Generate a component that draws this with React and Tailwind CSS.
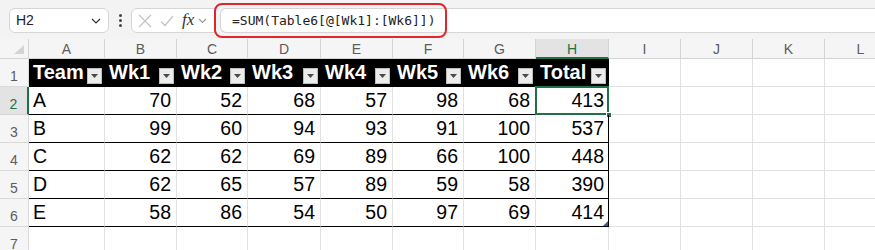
import React from "react";

const GRID =
  "grid grid-cols-[29px_76px_72px_71px_73px_72px_71px_72px_73px_72px_72px_72px_72px]";

const letters = ["A", "B", "C", "D", "E", "F", "G", "H", "I", "J", "K", "L"];
const headers = ["Team", "Wk1", "Wk2", "Wk3", "Wk4", "Wk5", "Wk6", "Total"];
const rows = [
  ["A", 70, 52, 68, 57, 98, 68, 413],
  ["B", 99, 60, 94, 93, 91, 100, 537],
  ["C", 62, 62, 69, 89, 66, 100, 448],
  ["D", 62, 65, 57, 89, 59, 58, 390],
  ["E", 58, 86, 54, 50, 97, 69, 414],
];

const FilterBtn = () => (
  <span className="self-end mb-[2px] w-[15px] h-[16px] shrink-0 bg-[#ececec] border border-[#bdbdbd] flex items-center justify-center">
    <svg width="7" height="4" viewBox="0 0 7 4">
      <path d="M0 0H7L3.5 4Z" fill="#4a4a4a" />
    </svg>
  </span>
);

const RowNum = ({ n, active }) => (
  <div
    className={
      active
        ? "h-[28px] flex items-end justify-center pb-[2px] border-b border-[#d4d4d4] border-r-2 border-r-[#1e7145] bg-[#e3e3e3] text-[#1e7145] text-[14px] leading-[16px]"
        : "h-[28px] flex items-end justify-center pb-[2px] border-b border-r border-[#d9d9d9] bg-[#f5f5f5] text-[#5c5c5c] text-[14px] leading-[16px]"
    }
  >
    {n}
  </div>
);

const Empty = () => <div className="h-[28px] border-r border-b border-[#e1e1e1] bg-white" />;

export default function App() {
  return (
    <div className="w-[875px] h-[250px] overflow-hidden bg-white font-['Liberation_Sans',Arial,sans-serif] relative">
      {/* formula bar */}
      <div className="h-[39px] bg-[#f3f3f3] flex items-start pt-[8px] pl-[9px]">
        <div className="w-[100px] h-[25px] bg-white border border-[#d6d6d6] rounded-[6px] flex items-center justify-between pl-[6px] pr-[7px]">
          <span className="text-[14px] text-[#222]">H2</span>
          <svg width="10" height="6" viewBox="0 0 10 6">
            <path d="M1 1l4 4 4-4" stroke="#333" strokeWidth="1.2" fill="none" />
          </svg>
        </div>
        <div className="w-[22px] h-[25px] flex flex-col items-center justify-center gap-[2px]">
          <span className="w-[3px] h-[3px] rounded-full bg-[#444]" />
          <span className="w-[3px] h-[3px] rounded-full bg-[#444]" />
          <span className="w-[3px] h-[3px] rounded-full bg-[#444]" />
        </div>
        <div className="w-[84px] h-[25px] bg-white border border-[#d6d6d6] rounded-l-[6px] flex items-center pl-[6px] gap-[8px]">
          <svg width="14" height="14" viewBox="0 0 14 14">
            <path d="M1 1L13 13M13 1L1 13" stroke="#c4c4c4" strokeWidth="1.2" />
          </svg>
          <svg width="14" height="12" viewBox="0 0 14 12">
            <path d="M1 6.5L5 10.5L13 1" stroke="#c4c4c4" strokeWidth="1.2" fill="none" />
          </svg>
          <span className="font-['Liberation_Serif',serif] italic text-[17px] text-[#333] leading-none -mt-[2px]">
            fx
          </span>
          <svg width="9" height="6" viewBox="0 0 9 6" className="-ml-[4px]">
            <path d="M1 1l3.5 3.5L8 1" stroke="#9a9a9a" strokeWidth="1.1" fill="none" />
          </svg>
        </div>
        <div className="ml-[5px] flex-1 h-[25px] bg-white border border-r-0 border-[#d6d6d6] rounded-l-[6px] flex items-center pl-[11px]">
          <span className="font-['DejaVu_Sans_Mono',monospace] text-[13px] text-[#222] pt-[1px]">
            =SUM(Table6[@[Wk1]:[Wk6]])
          </span>
        </div>
      </div>
      {/* annotation */}
      <div className="absolute left-[214px] top-[3px] w-[233px] h-[35px] border-2 border-[#e0262b] rounded-[8px]" />

      {/* column headers */}
      <div className={GRID + " h-[20px] bg-[#f5f5f5]"}>
        <div className="h-[20px] border-r border-b border-[#d4d4d4] relative">
          <svg width="10" height="9" viewBox="0 0 10 9" className="absolute right-[4px] bottom-[4px]">
            <path d="M10 0V9H0Z" fill="#d4d4d4" />
          </svg>
        </div>
        {letters.map((l) =>
          l === "H" ? (
            <div
              key={l}
              className="h-[20px] border-r border-[#d4d4d4] border-b-2 border-b-[#1e7145] bg-[#e3e3e3] text-center text-[14px] leading-[17px] pt-[2px] text-[#1e7145]"
            >
              {l}
            </div>
          ) : (
            <div
              key={l}
              className="h-[20px] border-r border-b border-[#d4d4d4] text-center text-[14px] leading-[17px] pt-[2px] text-[#5c5c5c]"
            >
              {l}
            </div>
          )
        )}
      </div>

      {/* row 1: table header */}
      <div className={GRID}>
        <RowNum n={1} />
        {headers.map((h) => (
          <div
            key={h}
            className="h-[28px] bg-black border-b border-black flex justify-between pl-[4px] pr-[3px] text-white font-bold text-[20px] leading-[27px]"
          >
            <span>{h}</span>
            <FilterBtn />
          </div>
        ))}
        <Empty />
        <Empty />
        <Empty />
        <Empty />
      </div>

      {/* data rows */}
      {rows.map((r, i) => (
        <div key={i} className={GRID}>
          <RowNum n={i + 2} active={i === 0} />
          {r.map((v, j) =>
            j === 0 ? (
              <div
                key={j}
                className="h-[28px] border-b border-b-black border-r border-r-[#e1e1e1] pl-[4px] text-[19.5px] leading-[27px] text-black"
              >
                {v}
              </div>
            ) : j === 7 ? (
              <div
                key={j}
                className="h-[28px] border-b border-r border-black pr-[4px] text-right text-[19.5px] leading-[27px] text-black relative"
              >
                {v}
                {i === 0 && (
                  <>
                    <span className="absolute -left-px -top-px -right-px -bottom-px border-2 border-[#1e7145]" />
                    <span className="absolute -right-[4px] -bottom-[4px] w-[6px] h-[6px] bg-[#1e7145] border border-white" />
                  </>
                )}
                {i === 4 && (
                  <svg width="5" height="5" viewBox="0 0 5 5" className="absolute right-0 bottom-0">
                    <path d="M5 0V5H0Z" fill="#3d5a8a" />
                  </svg>
                )}
              </div>
            ) : (
              <div
                key={j}
                className="h-[28px] border-b border-b-black border-r border-r-[#e1e1e1] pr-[5px] text-right text-[19.5px] leading-[27px] text-black"
              >
                {v}
              </div>
            )
          )}
          <Empty />
          <Empty />
          <Empty />
          <Empty />
        </div>
      ))}

      {/* row 7 */}
      <div className={GRID}>
        <RowNum n={7} />
        {letters.map((l) => (
          <Empty key={l} />
        ))}
      </div>
    </div>
  );
}
